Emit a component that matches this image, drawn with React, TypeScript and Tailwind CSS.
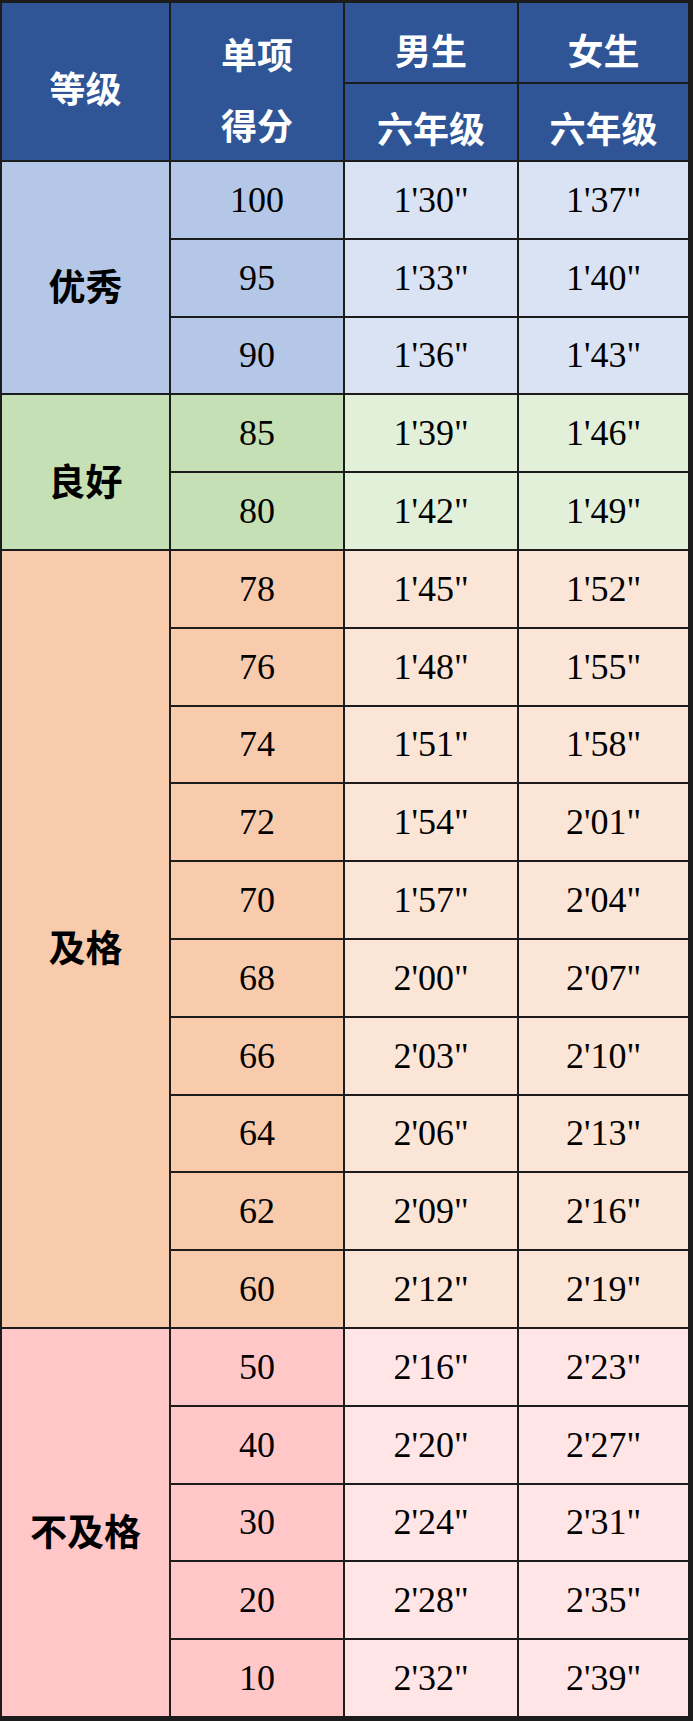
const rows: { score: number; boy: string; girl: string }[] = [
  { score: 100, boy: "1'30\"", girl: "1'37\"" },
  { score: 95, boy: "1'33\"", girl: "1'40\"" },
  { score: 90, boy: "1'36\"", girl: "1'43\"" },
  { score: 85, boy: "1'39\"", girl: "1'46\"" },
  { score: 80, boy: "1'42\"", girl: "1'49\"" },
  { score: 78, boy: "1'45\"", girl: "1'52\"" },
  { score: 76, boy: "1'48\"", girl: "1'55\"" },
  { score: 74, boy: "1'51\"", girl: "1'58\"" },
  { score: 72, boy: "1'54\"", girl: "2'01\"" },
  { score: 70, boy: "1'57\"", girl: "2'04\"" },
  { score: 68, boy: "2'00\"", girl: "2'07\"" },
  { score: 66, boy: "2'03\"", girl: "2'10\"" },
  { score: 64, boy: "2'06\"", girl: "2'13\"" },
  { score: 62, boy: "2'09\"", girl: "2'16\"" },
  { score: 60, boy: "2'12\"", girl: "2'19\"" },
  { score: 50, boy: "2'16\"", girl: "2'23\"" },
  { score: 40, boy: "2'20\"", girl: "2'27\"" },
  { score: 30, boy: "2'24\"", girl: "2'31\"" },
  { score: 20, boy: "2'28\"", girl: "2'35\"" },
  { score: 10, boy: "2'32\"", girl: "2'39\"" },
];

// grade groups: label, row count, dark colour, light colour
const groups = [
  { label: "优秀", count: 3, dark: "bg-[#b4c7e7]", light: "bg-[#dae3f3]" },
  { label: "良好", count: 2, dark: "bg-[#c5e0b4]", light: "bg-[#e2f0d9]" },
  { label: "及格", count: 10, dark: "bg-[#f8cbad]", light: "bg-[#fbe5d6]" },
  { label: "不及格", count: 5, dark: "bg-[#ffc7c7]", light: "bg-[#ffe5e5]" },
];

const cjk = "font-['Noto_Sans_CJK_SC',sans-serif] font-bold";
const serif = "font-['Liberation_Serif',serif] text-[36px] text-black";
const head = `${cjk} flex items-center justify-center bg-[#2f5597] text-white text-[36px] leading-none`;

export default function App() {
  let start = 0;
  return (
    <div className="w-[693px] h-[1721px] bg-[#1c1c1c] pt-[3px] pl-[2px] pr-[5px] pb-[5px]">
      <div className="grid grid-cols-[167px_172px_172px_169px] grid-rows-[79px_76px_repeat(20,75.8px)] gap-[2px]">
        <div className={`${head} row-span-2 pt-[11px]`}>等级</div>
        <div className={`${head} row-span-2 flex-col gap-[35px] pt-[14px]`}>
          <span>单项</span>
          <span>得分</span>
        </div>
        <div className={`${head} pt-[13px]`}>男生</div>
        <div className={`${head} pt-[13px]`}>女生</div>
        <div className={`${head} pt-[9px]`}>六年级</div>
        <div className={`${head} pt-[9px]`}>六年级</div>

        {groups.map((g) => {
          const items = rows.slice(start, start + g.count);
          const first = start;
          start += g.count;
          return items.map((r, i) => (
            <div key={r.score} className="contents">
              {i === 0 && (
                <div
                  className={`${g.dark} ${cjk} col-start-1 flex items-center justify-center pt-[16px] text-[37px] leading-none text-black`}
                  style={{ gridRow: `${first + 3} / span ${g.count}` }}
                >
                  {g.label}
                </div>
              )}
              <div className={`${g.dark} ${serif} col-start-2 flex items-center justify-center`}>
                {r.score}
              </div>
              <div className={`${g.light} ${serif} flex items-center justify-center`}>
                {r.boy}
              </div>
              <div className={`${g.light} ${serif} flex items-center justify-center`}>
                {r.girl}
              </div>
            </div>
          ));
        })}
      </div>
    </div>
  );
}
